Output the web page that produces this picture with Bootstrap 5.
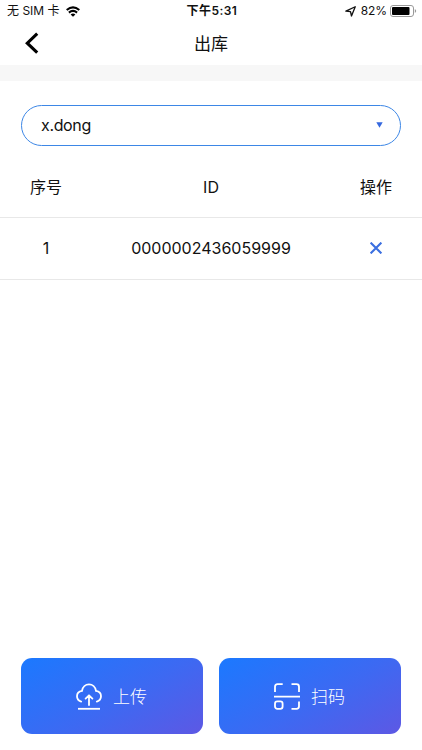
<!DOCTYPE html>
<html lang="zh-CN">
<head>
<meta charset="utf-8">
<meta name="viewport" content="width=device-width, initial-scale=1">
<title>出库</title>
<link href="https://cdn.jsdelivr.net/npm/bootstrap@5.3.0/dist/css/bootstrap.min.css" rel="stylesheet">
<style>
body{font-family:Inter,"Noto Sans CJK SC",sans-serif;font-size:16px;line-height:24px;color:#111;background:#fff}
.screen{height:750px}
.status{height:22px;font-size:12px;line-height:22px;padding:0 5px 0 7px}
.status .clock{font-weight:600;letter-spacing:.45px}
.status .side{flex:1 1 0}
.status .level{letter-spacing:-.1px;margin-right:3px}
.wifi{margin-left:6px}
.locate{margin-right:5px}
.topbar{display:grid;grid-template-columns:60px 1fr 60px;height:43px}
.topbar h1{font-size:17px;line-height:24px;font-weight:400}
.band{height:16px;background:#f7f7f7}
.picker{height:41px;margin:24px 21px 0 20.5px;padding:0 17px 1px 19.5px;border:1px solid #3d87e6;color:#111}
.picker .chosen{letter-spacing:-.35px}
.records{grid-template-columns:92px 1fr 92px;border-bottom:1px solid #e8e8e8}
.records.head{height:72px;padding-top:10px}
.records.item{height:62px;padding-bottom:1px}
.actions{gap:16px;padding:0 21px 16px}
.action{height:76px;border:0;border-radius:11px;gap:11px;color:#fff;font-size:17px;font-weight:300;background:linear-gradient(150deg,#1b79ff 0%,#3d69f2 55%,#5d58e4 100%)}
.action span{padding:3px 1px 0 0}
.action:hover{color:#fff}
</style>
</head>
<body>
<main class="screen d-flex flex-column overflow-hidden">
  <div class="status d-flex align-items-center">
    <div class="side d-flex align-items-center">
      <span>无 SIM 卡</span>
      <svg class="wifi" width="14" height="11" viewBox="0 0 14 11" fill="none" stroke="#000" stroke-width="2.1"><path d="M.7 4Q7-1.4 13.3 4M2.9 6.6Q7 3.2 11.1 6.6"/><path d="M7 10.8 4.6 8.4Q7 6.6 9.4 8.4Z" fill="#000" stroke="none"/></svg>
    </div>
    <span class="clock">下午5:31</span>
    <div class="side d-flex align-items-center justify-content-end">
      <svg class="locate" width="11" height="11" viewBox="0 0 10 10" fill="none" stroke="#111" stroke-width="1.2" stroke-linejoin="round"><path d="M9.3.7 5.9 9.1 5 5.1.8 4.7Z"/></svg>
      <span class="level">82%</span>
      <svg width="27" height="12" viewBox="0 0 27 12"><rect x=".5" y=".5" width="23" height="11" rx="2.5" fill="none" stroke="#999"/><rect x="2" y="2" width="17.5" height="8" rx="1" fill="#000"/><path d="M24.8 4q2.8 2 0 4Z" fill="#999"/></svg>
    </div>
  </div>
  <header class="topbar align-items-center">
    <svg width="60" height="43" viewBox="0 0 60 43" fill="none" stroke="#000" stroke-width="3.1"><path d="M37.2 11.7 27.3 21.2 37.2 30.6"/></svg>
    <h1 class="m-0 text-center">出库</h1>
  </header>
  <div class="band"></div>
  <div class="picker rounded-pill d-flex align-items-center justify-content-between" role="button">
    <span class="chosen">x.dong</span>
    <svg width="7" height="6" viewBox="0 0 7 6"><path d="M.3.2h6.4L3.5 5.7Z" fill="#3568df"/></svg>
  </div>
  <div class="records head d-grid align-items-center text-center">
    <span>序号</span><span>ID</span><span>操作</span>
  </div>
  <div class="records item d-grid align-items-center text-center">
    <span>1</span><span>0000002436059999</span>
    <svg class="mx-auto" width="12" height="12" viewBox="0 0 12 12" stroke="#3b6fe0" stroke-width="2.1"><path d="M.6.6 11.4 11.4M11.4.6.6 11.4"/></svg>
  </div>
  <div class="actions d-flex mt-auto">
    <button class="action btn flex-fill w-50 d-flex align-items-center justify-content-center p-0" type="button">
      <svg width="26" height="27" viewBox="0 0 26 27" fill="none" stroke="#fff" stroke-width="1.8" stroke-linecap="round"><path d="M5.2 18.6C2.6 17.8 1 15.8 1 13.2 1 10.4 3 8.3 6 7.9 6.6 4 9.5 1.4 13 1.4S19.4 4 20 7.9C23 8.3 25 10.4 25 13.2 25 15.8 23.4 17.8 20.8 18.6"/><path d="M13 22V12.8M9.6 15.6 13 12.3 16.4 15.6" stroke-linejoin="round"/><path d="M2 25.8H24" stroke-linecap="butt"/></svg>
      <span>上传</span>
    </button>
    <button class="action btn flex-fill w-50 d-flex align-items-center justify-content-center p-0" type="button">
      <svg width="26" height="27" viewBox="0 0 26 27" fill="none" stroke="#fff" stroke-width="1.8"><path d="M1 9V3.7Q1 1.2 3.5 1.2H8.7M17.5 1.2H22.5Q25 1.2 25 3.7V9M25 18.5V23.3Q25 25.8 22.5 25.8H17.5M0 13.7H26"/><rect x="1" y="18.4" width="7.6" height="7.4" rx="2.3"/></svg>
      <span>扫码</span>
    </button>
  </div>
</main>
<script src="https://cdn.jsdelivr.net/npm/bootstrap@5.3.0/dist/js/bootstrap.bundle.min.js"></script>
</body>
</html>
